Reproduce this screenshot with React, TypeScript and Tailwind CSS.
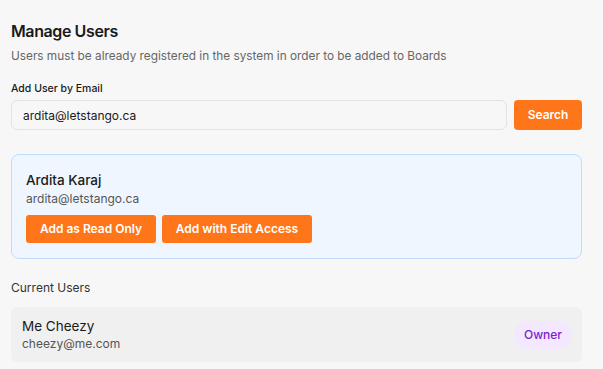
export default function App() {
  return (
    <div className="min-h-[369px] w-full bg-[#f7f7f7] pl-[11px] pr-[21px] pt-[21px] font-['Inter',sans-serif] text-[#1a1a1a]">
      <h2 className="text-[16px] font-semibold leading-[20px] tracking-tight">Manage Users</h2>
      <p className="mt-[5px] text-[11.8px] leading-[20px] text-[#666]">
        Users must be already registered in the system in order to be added to Boards
      </p>

      <label className="mt-[16px] block text-[10.5px] font-medium leading-[14px]">Add User by Email</label>
      <div className="mt-[4px] flex gap-[7px]">
        <input
          readOnly
          value="ardita@letstango.ca"
          className="h-[30px] flex-1 rounded-[6px] border border-[#e3e3e3] bg-[#f7f7f7] px-[11px] text-[12px] text-[#1a1a1a] outline-none"
        />
        <button className="h-[30px] w-[68px] rounded-[4px] bg-[#ff7519] text-[12px] font-semibold text-white">
          Search
        </button>
      </div>

      <div className="mt-[24px] rounded-[8px] border border-[#bfdbfe] bg-[#eff6ff] px-[14px] pb-[15px] pt-[16px]">
        <div className="text-[13.5px] font-medium leading-[18px]">Ardita Karaj</div>
        <div className="mt-[1px] text-[12px] leading-[17px] text-[#555]">ardita@letstango.ca</div>
        <div className="mt-[8px] flex gap-[6px]">
          <button className="h-[28px] w-[130px] rounded-[3px] bg-[#ff7519] text-[12px] font-semibold text-white">
            Add as Read Only
          </button>
          <button className="h-[28px] w-[150px] rounded-[3px] bg-[#ff7519] text-[12px] font-semibold text-white">
            Add with Edit Access
          </button>
        </div>
      </div>

      <div className="mt-[20px] text-[12px] leading-[17px] text-[#333]">Current Users</div>
      <div className="mt-[11px] flex h-[55px] items-center justify-between rounded-[6px] bg-[#f0f0f0] pl-[11px] pr-[10px]">
        <div>
          <div className="text-[13.5px] leading-[18px]">Me Cheezy</div>
          <div className="text-[12px] leading-[17px] text-[#555]">cheezy@me.com</div>
        </div>
        <span className="rounded-full bg-[#f3e8ff] px-[10px] py-[5px] text-[12px] font-medium text-[#7e22ce]">
          Owner
        </span>
      </div>
    </div>
  );
}
